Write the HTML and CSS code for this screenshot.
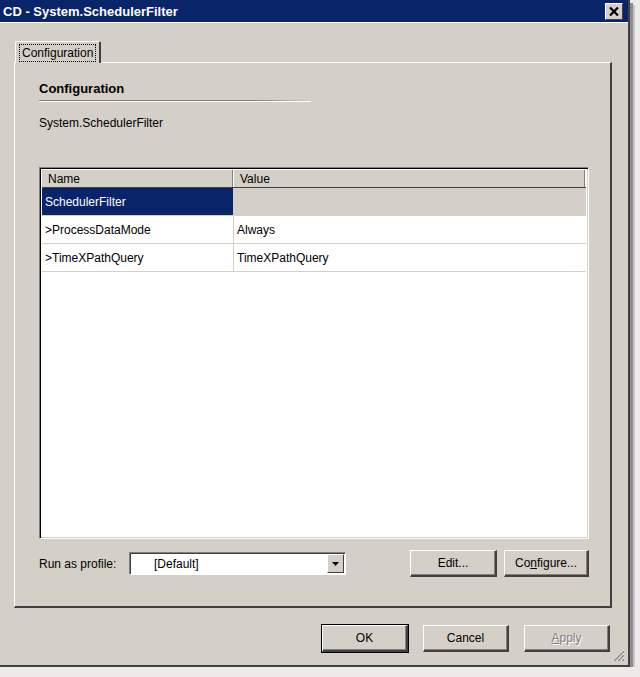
FILE: index.html
```html
<!DOCTYPE html>
<html lang="en">
<head>
    <meta charset="utf-8">
    <title>CD - System.SchedulerFilter</title>
    <link rel="stylesheet" href="styles.css">
</head>
<body>

<div class="window">
    <div class="titlebar">
        <span class="title">CD - System.SchedulerFilter</span>
        <span class="close-btn">
            <svg width="10" height="9" viewBox="0 0 10 9"><path d="M1 0.5L9 8.5M9 0.5L1 8.5" stroke="#000" stroke-width="2.2"/></svg>
        </span>
    </div>

    <div class="content">
        <div class="tabs">
            <div class="tab active"><span class="focus">Configuration</span></div>
        </div>

        <div class="panel">
            <h2 class="section-title">Configuration</h2>
            <div class="rule"></div>
            <div class="subtitle">System.SchedulerFilter</div>

            <div class="grid">
                <div class="grid-row grid-head">
                    <div class="cell name">Name</div>
                    <div class="cell value">Value</div>
                </div>
                <div class="grid-row">
                    <div class="cell name selected">SchedulerFilter</div>
                    <div class="cell value group">&nbsp;</div>
                </div>
                <div class="grid-row">
                    <div class="cell name">&gt;ProcessDataMode</div>
                    <div class="cell value">Always</div>
                </div>
                <div class="grid-row">
                    <div class="cell name">&gt;TimeXPathQuery</div>
                    <div class="cell value">TimeXPathQuery</div>
                </div>
            </div>

            <div class="profile-row">
                <label class="profile-label">Run as profile:</label>
                <div class="combo">
                    <span class="combo-text">[Default]</span>
                    <span class="combo-btn">
                        <svg width="7" height="4" viewBox="0 0 7 4"><path d="M0 0h7L3.5 4z" fill="#000"/></svg>
                    </span>
                </div>
                <div class="spacer"></div>
                <button class="btn edit-btn">Edit...</button>
                <button class="btn conf-btn">Co<u>n</u>figure...</button>
            </div>
        </div>

        <div class="dialog-buttons">
            <button class="btn big default">OK</button>
            <button class="btn big">Cancel</button>
            <button class="btn big disabled"><u>A</u>pply</button>
        </div>
    </div>

    <svg class="grip" width="13" height="13" viewBox="0 0 13 13">
        <path d="M12 1L1 12M12 5L5 12M12 9L9 12" stroke="#fff" stroke-width="1"/>
        <path d="M12 2L2 12M12 6L6 12M12 10L10 12" stroke="#808080" stroke-width="1.2"/>
    </svg>
</div>

</body>
</html>
```

FILE: styles.css
```css
body {
    margin: 0;
    padding: 0;
    background-color: #ecebe8;
    font-family: "Liberation Sans", Arial, sans-serif;
    font-size: 12px;
    color: #000;
}

.window {
    position: relative;
    width: 628px;
    height: 665px;
    background-color: #d4d0c8;
    border-right: 2px solid #404040;
    border-bottom: 2px solid #404040;
    box-shadow: 3px 3px 0 #8c8c8c, 5px 5px 0 #c8c8c8;
}

.titlebar {
    height: 22px;
    background-color: #0a246a;
    border-bottom: 1px solid #ffffff;
    display: flex;
    align-items: center;
    justify-content: space-between;
    padding: 0 5px 0 3px;
}

.title {
    color: #fff;
    font-weight: bold;
    font-size: 13px;
}

.close-btn {
    width: 16px;
    height: 15px;
    background-color: #d4d0c8;
    border-top: 1px solid #fff;
    border-left: 1px solid #fff;
    border-right: 1px solid #404040;
    border-bottom: 1px solid #404040;
    display: flex;
    align-items: center;
    justify-content: center;
}

.content {
    padding: 18px 18px 0 14px;
}

.tabs {
    display: flex;
    padding-left: 1px;
}

.tab {
    height: 19px;
    padding: 2px 3px 0 3px;
    border-top: 1px solid #fff;
    border-left: 1px solid #fff;
    border-right: 2px solid #404040;
    border-radius: 2px 2px 0 0;
    margin-bottom: -1px;
    background-color: #d4d0c8;
    position: relative;
    z-index: 1;
}

.focus {
    display: inline-block;
    border: 1px dotted #000;
    padding: 1px 2px;
    line-height: 14px;
}

.panel {
    width: 598px;
    height: 546px;
    border-top: 1px solid #fff;
    border-left: 1px solid #fff;
    border-right: 2px solid #404040;
    border-bottom: 2px solid #404040;
    padding: 0 21px 0 24px;
    box-sizing: border-box;
    display: flex;
    flex-direction: column;
}

.section-title {
    margin: 18px 0 0 0;
    font-size: 13px;
    font-weight: bold;
    line-height: 16px;
}

.rule {
    margin-top: 3px;
    height: 1px;
    width: 272px;
    background: linear-gradient(to right, #808080, #808080 80%, rgba(128,128,128,0));
    border-bottom: 1px solid #fff;
}

.subtitle {
    margin-top: 13px;
    line-height: 16px;
}

.grid {
    margin-top: 36px;
    height: 372px;
    background-color: #fff;
    border-top: 1px solid #808080;
    border-left: 1px solid #808080;
    border-right: 1px solid #fff;
    border-bottom: 1px solid #fff;
    box-shadow: inset 1px 1px 0 #000, inset -1px -1px 0 #d4d0c8;
    padding: 2px 2px 0 2px;
    box-sizing: border-box;
}

.grid-row {
    display: flex;
    height: 27px;
    border-bottom: 1px solid #d4d0c8;
}

.grid-head {
    height: 17px;
    background-color: #d4d0c8;
    border-bottom: 1px solid #404040;
}

.cell {
    display: flex;
    align-items: center;
    padding-left: 3px;
    white-space: nowrap;
}

.cell.name {
    width: 188px;
    border-right: 1px solid #d4d0c8;
}

.cell.value {
    flex: 1;
}

.grid-head .cell {
    padding-left: 6px;
    border-right: 1px solid #fff;
    box-shadow: inset -1px 0 0 #808080;
}

.grid-head .cell.name {
    width: 185px;
}

.cell.selected {
    background-color: #0a246a;
    color: #fff;
}

.cell.group {
    background-color: #d4d0c8;
}

.profile-row {
    margin-top: 11px;
    display: flex;
    align-items: center;
    height: 27px;
}

.profile-label {
    width: 90px;
}

.combo {
    width: 217px;
    height: 23px;
    box-sizing: border-box;
    background-color: #fff;
    border-top: 1px solid #808080;
    border-left: 1px solid #808080;
    border-right: 1px solid #fff;
    border-bottom: 1px solid #fff;
    box-shadow: inset 1px 1px 0 #404040;
    display: flex;
    align-items: center;
    justify-content: space-between;
    padding: 1px 1px 1px 24px;
}

.combo-btn {
    width: 15px;
    height: 17px;
    background-color: #d4d0c8;
    border-top: 1px solid #fff;
    border-left: 1px solid #fff;
    border-right: 1px solid #404040;
    border-bottom: 1px solid #404040;
    display: flex;
    align-items: center;
    justify-content: center;
}

.spacer {
    flex: 1;
}

.btn {
    font-family: "Liberation Sans", Arial, sans-serif;
    font-size: 12px;
    height: 27px;
    background-color: #d4d0c8;
    border-top: 1px solid #fff;
    border-left: 1px solid #fff;
    border-right: 2px solid #404040;
    border-bottom: 2px solid #404040;
    box-shadow: inset -1px -1px 0 #808080;
    padding: 0;
    color: #000;
}

.edit-btn {
    width: 87px;
}

.conf-btn {
    width: 85px;
    margin-left: 7px;
}

.dialog-buttons {
    margin-top: 17px;
    display: flex;
    justify-content: flex-end;
    gap: 15px;
}

.btn.big {
    width: 86px;
}

.btn.default {
    outline: 1px solid #000;
}

.btn.disabled {
    color: #808080;
    text-shadow: 1px 1px 0 #fff;
}

.grip {
    position: absolute;
    right: 3px;
    bottom: 3px;
}
```
